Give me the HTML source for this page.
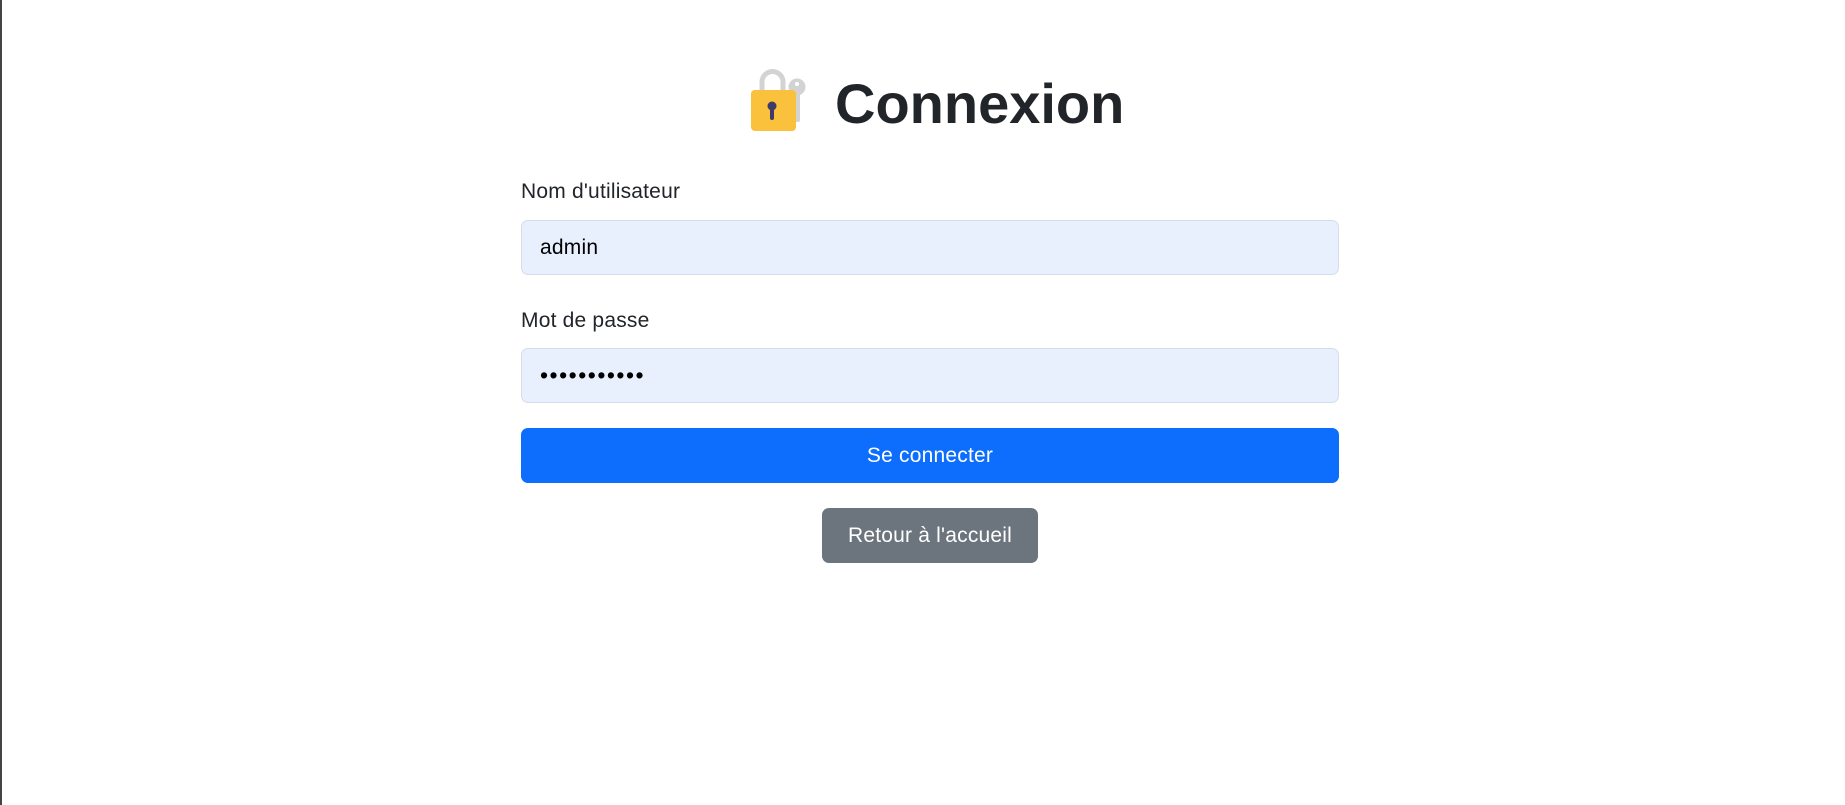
<!DOCTYPE html>
<html><head><meta charset="utf-8"><style>
html,body{margin:0;padding:0;background:#fff;width:1845px;height:805px;overflow:hidden;font-family:"Liberation Sans",sans-serif;color:#212529}
body{border-left:2px solid #444;box-sizing:border-box}
.abs{position:absolute}
h1{position:absolute;left:835px;top:66px;margin:0;font-size:56px;font-weight:600;line-height:76px;color:#212529}
.lbl{position:absolute;left:521px;font-size:21px;line-height:24px;letter-spacing:0.2px}
.inp{position:absolute;left:521px;width:818px;height:55px;box-sizing:border-box;background:#e8f0fe;border:1px solid #d6dde8;border-radius:7px;font-size:21px;letter-spacing:0.2px;line-height:53px;padding-left:18px;color:#000}
.btn{position:absolute;border-radius:7px;color:#fff;font-size:21px;letter-spacing:0.2px;text-align:center}
</style></head><body>
<svg class="abs" style="left:740px;top:60px" width="80" height="80" viewBox="0 0 80 80">
<path d="M22 31 V22 a10.5 10.5 0 0 1 21 0 V31" fill="none" stroke="#d3d3d3" stroke-width="5"/>
<circle cx="57" cy="27" r="8.5" fill="#d3d3d3"/>
<rect x="53" y="30" width="7" height="32" rx="2" fill="#d3d3d3"/>
<circle cx="57" cy="24" r="2" fill="#fff"/>
<rect x="11" y="30" width="45" height="41" rx="4" fill="#f9c13c"/>
<circle cx="32" cy="46" r="4.5" fill="#3e3a6a"/>
<rect x="30" y="46" width="4" height="14" rx="2" fill="#3e3a6a"/>
</svg>
<h1>Connexion</h1>
<div class="lbl" style="top:180px">Nom d'utilisateur</div>
<div class="inp" style="top:220px">admin</div>
<div class="lbl" style="top:309px">Mot de passe</div>
<div class="inp" style="top:348px;font-size:23px;letter-spacing:1.5px">•••••••••••</div>
<div class="btn" style="left:521px;top:428px;width:818px;height:55px;line-height:55px;background:#0d6efd">Se connecter</div>
<div class="btn" style="left:822px;top:508px;width:216px;height:55px;line-height:55px;background:#6c757d">Retour à l'accueil</div>
</body></html>
